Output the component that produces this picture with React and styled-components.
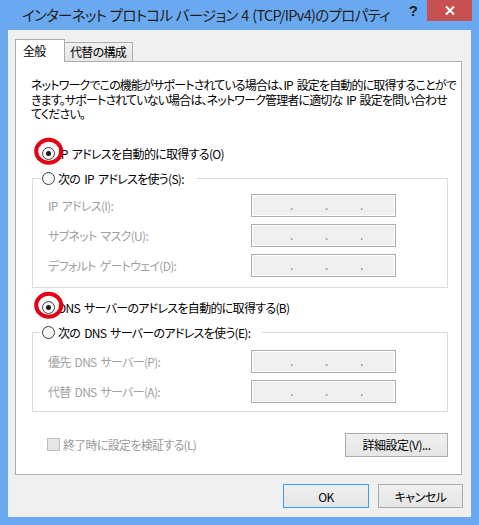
import styled, { createGlobalStyle } from 'styled-components';

const GlobalStyle = createGlobalStyle`
  body {
    margin: 0;
    background: #6aa8ee;
  }
`;

const FONT = `"Noto Sans CJK JP", "Noto Sans", sans-serif`;

const Window = styled.div`
  width: 479px;
  height: 525px;
  box-sizing: border-box;
  display: flex;
  flex-direction: column;
  background: #6aa9ef;
  font-family: ${FONT};
  font-feature-settings: 'palt';
  letter-spacing: -0.7px;
  color: #000;
`;

const TitleBar = styled.div`
  height: 30px;
  flex-shrink: 0;
  display: flex;
  align-items: flex-start;
`;

const Title = styled.div`
  padding: 5px 0 0 22px;
  font-size: 14.5px;
  line-height: 20px;
  letter-spacing: -0.7px;
  word-spacing: 1px;
  color: #1e1e1e;
  white-space: nowrap;
`;

const HelpButton = styled.div`
  margin-left: auto;
  width: 26px;
  height: 21px;
  display: flex;
  align-items: center;
  justify-content: center;
  font-family: 'Liberation Sans', sans-serif;
  font-weight: bold;
  font-size: 15px;
  color: #1e1e1e;
`;

const CloseButton = styled.div`
  width: 45px;
  height: 21px;
  margin: 0 7px 0 1px;
  background: #c75050;
  display: flex;
  align-items: center;
  justify-content: center;
`;

const Client = styled.div`
  flex: 1;
  margin: 0 8px 8px;
  padding: 9px 8px 0 7px;
  background: #f0f0f0;
  display: flex;
  flex-direction: column;
`;

const TabRow = styled.div`
  display: flex;
  align-items: flex-end;
  height: 22px;
`;

const Tab = styled.div`
  position: relative;
  box-sizing: border-box;
  width: ${({ $width }) => $width}px;
  height: ${({ $active }) => ($active ? '23px' : '19px')};
  margin-bottom: ${({ $active }) => ($active ? '-1px' : '0')};
  margin-left: ${({ $active }) => ($active ? '0' : '-1px')};
  z-index: ${({ $active }) => ($active ? 1 : 0)};
  padding-left: ${({ $active }) => ($active ? '7px' : '5px')};
  border: 1px solid #acacac;
  border-bottom: none;
  background: ${({ $active }) =>
    $active ? '#fff' : 'linear-gradient(#f0f0f0, #e5e5e5)'};
  font-size: 12px;
  line-height: ${({ $active }) => ($active ? '21px' : '18px')};
  white-space: nowrap;
`;

const Panel = styled.div`
  box-sizing: border-box;
  width: 447px;
  height: 414px;
  padding: 16px 13px 0 16px;
  border: 1px solid #acacac;
  background: #fff;
  display: flex;
  flex-direction: column;
`;

const Description = styled.p`
  margin: 0 0 0 -1px;
  font-size: 12px;
  line-height: 14.5px;
  letter-spacing: -0.85px;
  word-spacing: 2px;
  white-space: nowrap;
`;

const RadioRow = styled.div`
  display: flex;
  align-items: center;
  gap: 3px;
  height: 16px;
  margin-top: ${({ $gap }) => $gap}px;
  padding-left: 10px;
  font-size: 12px;
  word-spacing: 2px;
  white-space: nowrap;
`;

const Radio = styled.span`
  position: relative;
  flex-shrink: 0;
  box-sizing: border-box;
  width: 13px;
  height: 13px;
  border: 1px solid #3c3c3c;
  border-radius: 50%;
  background: linear-gradient(#f4f4f4, #fff);
  display: flex;
  align-items: center;
  justify-content: center;

  &::before {
    content: '';
    display: ${({ $checked }) => ($checked ? 'block' : 'none')};
    width: 5px;
    height: 5px;
    border-radius: 50%;
    background: #1a1a1a;
  }

  &::after {
    content: '';
    display: ${({ $marked }) => ($marked ? 'block' : 'none')};
    position: absolute;
    left: 50%;
    top: 50%;
    width: 29px;
    height: 27px;
    box-sizing: border-box;
    border: 4px solid #e60012;
    border-radius: 50%;
    transform: translate(-51%, -60%);
  }
`;

const Group = styled.fieldset`
  margin: ${({ $gap }) => $gap}px 0 0;
  padding: ${({ $top }) => $top}px 51px ${({ $bottom }) => $bottom}px 15px;
  min-width: 0;
  border: 1px solid #dcdcdc;
`;

const GroupLegend = styled.legend`
  display: flex;
  align-items: center;
  gap: 3px;
  height: 16px;
  margin-left: -7px;
  padding: 0 12px 0 1px;
  font-size: 12px;
  word-spacing: 2px;
  white-space: nowrap;
`;

const Fields = styled.div`
  display: grid;
  grid-template-columns: 1fr 145px;
  row-gap: 7px;
  align-items: center;
`;

const FieldLabel = styled.span`
  font-size: 12px;
  word-spacing: 2px;
  color: #a0a0a0;
  white-space: nowrap;
`;

const IpBox = styled.div`
  box-sizing: border-box;
  height: 23px;
  padding-left: 38px;
  border: 1px solid #abadb3;
  box-shadow: inset 0 0 0 1px #fff;
  background: #efefef;
  display: grid;
  grid-template-columns: repeat(3, 35px);
  font-size: 12px;
  line-height: 19px;
  color: #8a8a8a;
`;

const BottomRow = styled.div`
  display: flex;
  align-items: center;
  height: 24px;
  margin-top: 21px;
  padding-left: 15px;
`;

const CheckBox = styled.span`
  box-sizing: border-box;
  width: 13px;
  height: 13px;
  border: 1px solid #bcbcbc;
  background: #e6e6e6;
`;

const CheckLabel = styled.span`
  margin-left: 3px;
  font-size: 12px;
  color: #9a9a9a;
`;

const Button = styled.button`
  box-sizing: border-box;
  width: ${({ $width }) => $width}px;
  height: 24px;
  margin-left: ${({ $push }) => ($push ? 'auto' : '0')};
  padding: 0;
  border: 1px solid ${({ $default }) => ($default ? '#3c9cf0' : '#acacac')};
  background: linear-gradient(#efefef, #e5e5e5);
  font-family: ${FONT};
  font-feature-settings: 'palt';
  letter-spacing: -0.5px;
  font-size: 12px;
  color: #000;
`;

const ButtonRow = styled.div`
  display: flex;
  justify-content: flex-end;
  gap: 9px;
  margin-top: 9px;
`;

function IpField() {
  return (
    <IpBox>
      <span>.</span>
      <span>.</span>
      <span>.</span>
    </IpBox>
  );
}

export default function App() {
  return (
    <>
      <GlobalStyle />
      <Window>
        <TitleBar>
          <Title>インターネット プロトコル バージョン 4 (TCP/IPv4)のプロパティ</Title>
          <HelpButton>?</HelpButton>
          <CloseButton>
            <svg width="10" height="9" viewBox="0 0 10 9">
              <path d="M1 0.5 L9 8.5 M9 0.5 L1 8.5" stroke="#fff" strokeWidth="2" />
            </svg>
          </CloseButton>
        </TitleBar>
        <Client>
          <TabRow>
            <Tab $active $width={50}>
              全般
            </Tab>
            <Tab $width={69}>代替の構成</Tab>
          </TabRow>
          <Panel>
            <Description>
              ネットワークでこの機能がサポートされている場合は、IP 設定を自動的に取得することがで
              <br />
              きます。サポートされていない場合は、ネットワーク管理者に適切な IP 設定を問い合わせ
              <br />
              てください。
            </Description>
            <RadioRow $gap={24}>
              <Radio $checked $marked />
              IP アドレスを自動的に取得する(O)
            </RadioRow>
            <Group $gap={9} $top={7} $bottom={10}>
              <GroupLegend>
                <Radio />
                次の IP アドレスを使う(S):
              </GroupLegend>
              <Fields>
                <FieldLabel>IP アドレス(I):</FieldLabel>
                <IpField />
                <FieldLabel>サブネット マスク(U):</FieldLabel>
                <IpField />
                <FieldLabel>デフォルト ゲートウェイ(D):</FieldLabel>
                <IpField />
              </Fields>
            </Group>
            <RadioRow $gap={12}>
              <Radio $checked $marked />
              DNS サーバーのアドレスを自動的に取得する(B)
            </RadioRow>
            <Group $gap={9} $top={9} $bottom={8}>
              <GroupLegend>
                <Radio />
                次の DNS サーバーのアドレスを使う(E):
              </GroupLegend>
              <Fields>
                <FieldLabel>優先 DNS サーバー(P):</FieldLabel>
                <IpField />
                <FieldLabel>代替 DNS サーバー(A):</FieldLabel>
                <IpField />
              </Fields>
            </Group>
            <BottomRow>
              <CheckBox />
              <CheckLabel>終了時に設定を検証する(L)</CheckLabel>
              <Button $width={103} $push>
                詳細設定(V)...
              </Button>
            </BottomRow>
          </Panel>
          <ButtonRow>
            <Button $width={86} $default>
              OK
            </Button>
            <Button $width={85}>キャンセル</Button>
          </ButtonRow>
        </Client>
      </Window>
    </>
  );
}
